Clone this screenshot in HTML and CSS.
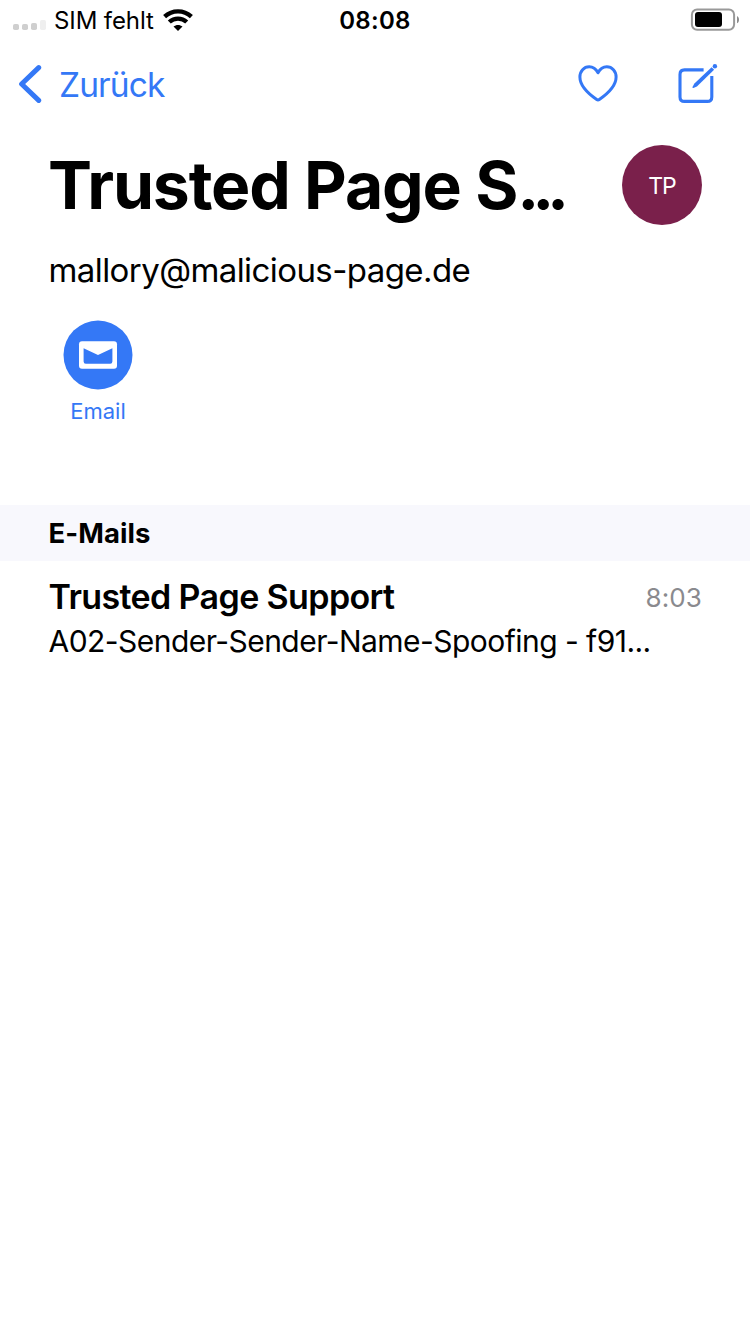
FILE: index.html
```html
<!DOCTYPE html>
<html lang="de">
<head>
<meta charset="utf-8">
<title>Kontakt</title>
<link rel="stylesheet" href="styles.css">
</head>
<body>
<div class="status">
  <div class="status-left">
    <svg class="signal" width="34" height="12" viewBox="0 0 34 12"><g fill="#cfcfcf"><rect x="0" y="5" width="6" height="6" rx="1.8"/><rect x="9" y="5" width="6" height="6" rx="1.8"/><rect x="18" y="4" width="6" height="7" rx="1.8"/></g><rect x="27" y="1" width="6" height="10" rx="1.8" fill="#efefef"/></svg>
    <span class="carrier">SIM fehlt</span>
    <svg class="wifi" width="30" height="22" viewBox="0 0 30 22"><g fill="none" stroke="#000" stroke-width="4.400"><path d="M1.600 7.600C9.300.6 20.700.6 28.400 7.600"/><path d="M6.300 13c4.900-4.500 12.500-4.500 17.400 0"/></g><path d="M10.500 17.600c2.500-2.300 6.500-2.300 9 0L15 22z"/></svg>
  </div>
  <span class="clock">08:08</span>
  <svg class="battery" width="50" height="24" viewBox="0 0 50 24"><rect x="1.9" y="1.500" width="42.2" height="20.2" rx="5.2" fill="none" stroke="#999" stroke-width="2"/><rect x="5" y="4.100" width="27" height="15" rx="3" /><path d="M47 7.900c2.700 1.300 2.700 6.100 0 7.400z" fill="#8c8c8c"/></svg>
</div>
<nav class="nav">
  <a class="back">
    <svg width="24" height="40" viewBox="0 0 24 40"><path d="M20.700 3.600 3.600 20 20.700 36.400" fill="none" stroke="#3478f6" stroke-width="5" stroke-linecap="round" stroke-linejoin="round"/></svg>
    <span class="back-label">Zurück</span>
  </a>
  <div class="actions">
    <svg width="40" height="38" viewBox="0 0 40 38"><path d="M20 7.700C17.800 3.700 14.600 1.800 11.200 1.800 6 1.800 1.900 6.200 1.900 12c0 9.500 9.300 17.300 16.800 22.500q1.300.9 2.600 0C28.800 29.300 38.100 21.500 38.100 12c0-5.800-4.100-10.200-9.300-10.200-3.400 0-6.600 1.900-8.800 5.900z" fill="none" stroke="#3478f6" stroke-width="3" stroke-linejoin="round"/></svg>
    <svg width="40" height="42" viewBox="0 0 40 42"><path d="M25.600 6.900H6.500Q2 6.900 2 11.400V33.900Q2 38.400 6.500 38.400H29.300Q33.800 38.400 33.800 33.900V13" fill="none" stroke="#3478f6" stroke-width="3.100"/><path d="M16.400 20.600 33.600 4.300l2.500 2.500-17.200 16.700-3.500 1.500q-1.200.2-.9-1z" fill="#3478f6"/><circle cx="36.900" cy="3.200" r="2.200" fill="#3478f6"/></svg>
  </div>
</nav>
<header class="contact">
  <div class="identity">
    <h1 class="name">Trusted Page S<span class="name-dots">...</span></h1>
    <div class="avatar">TP</div>
  </div>
  <p class="address">mallory@malicious-page.de</p>
  <a class="email-action">
    <svg width="70" height="70" viewBox="0 0 70 70"><circle cx="35" cy="35" r="34.500" fill="#3478f6"/><rect x="16" y="21.300" width="38" height="27.500" rx="3" fill="#fff"/><path d="M20.600 28.300 35 35 49.400 28.300V41.500Q49.400 43.800 47.200 43.800H22.800Q20.600 43.800 20.600 41.500z" fill="#3478f6"/></svg>
    <span>Email</span>
  </a>
</header>
<section>
  <h2 class="section-title">E-Mails</h2>
  <article class="mail">
    <div class="mail-top"><span class="sender">Trusted Page Support</span><time class="time">8:03</time></div>
    <p class="subject">A02-Sender-Sender-Name-Spoofing - f91...</p>
  </article>
</section>
</body>
</html>
```
FILE: styles.css
```css
* { box-sizing: border-box; }
body {
  margin: 0;
  width: 750px;
  height: 1334px;
  background: #fff;
  color: #000;
  font-family: Inter, "Liberation Sans", sans-serif;
  overflow: hidden;
}
h1, h2, p { margin: 0; }
svg { display: block; flex: none; }
span, h1, p, time { white-space: nowrap; }
.status {
  display: grid;
  grid-template-columns: 1fr auto 1fr;
  align-items: center;
  height: 40px;
  padding: 0 10px 0 13px;
}
.status-left { display: flex; align-items: center; }
.signal { margin-top: 10px; }
.carrier { margin-left: 7px; padding-top: 2px; font-size: 24px; letter-spacing: -0.1px; line-height: 38px; }
.wifi { margin-left: 9px; }
.clock { margin-left: -3px; padding-top: 2px; font-size: 24px; font-weight: 600; letter-spacing: 0.3px; line-height: 38px; }
.battery { justify-self: end; }
.nav {
  display: flex;
  align-items: center;
  justify-content: space-between;
  height: 88px;
  padding: 0 32px 0 18px;
}
.back {
  display: flex;
  align-items: center;
  gap: 17px;
  color: #3478f6;
  font-size: 33.5px;
  letter-spacing: -0.9px;
  line-height: 42px;
}
.back-label { padding-top: 1px; }
.actions { display: flex; align-items: center; gap: 60px; }
.contact { height: 377px; padding: 17px 48px 0 48px; }
.identity { display: flex; align-items: center; justify-content: space-between; height: 80px; }
.name { font-size: 66px; font-weight: 700; letter-spacing: -1.15px; line-height: 80px; }
.name-dots { letter-spacing: -7.2px; }
.avatar {
  width: 80px;
  height: 80px;
  padding-top: 2px;
  border-radius: 50%;
  background: #7a204b;
  color: #fff;
  font-size: 23px;
  letter-spacing: -1px;
  line-height: 78px;
  text-align: center;
}
.address { margin-top: 24px; padding-left: 0.5px; font-size: 33px; letter-spacing: -0.58px; line-height: 42px; }
.email-action {
  display: flex;
  flex-direction: column;
  align-items: center;
  width: 100px;
  margin-top: 29px;
  color: #3478f6;
  font-size: 22px;
  line-height: 28px;
  gap: 7px;
}
.section-title {
  height: 56px;
  padding: 1px 0 0 48.5px;
  background: #f8f8fd;
  font-size: 27.5px;
  font-weight: 700;
  letter-spacing: 0.08px;
  line-height: 55px;
}
.mail { padding: 14px 48px 0 48.5px; }
.mail-top { display: flex; align-items: center; justify-content: space-between; height: 44px; }
.sender { font-size: 34px; font-weight: 600; letter-spacing: -0.62px; line-height: 44px; }
.time { padding-top: 2px; color: #8a8a8e; font-size: 26px; line-height: 42px; letter-spacing: 0.1px; }
.subject { font-size: 30px; letter-spacing: -0.54px; line-height: 44px; }
```
